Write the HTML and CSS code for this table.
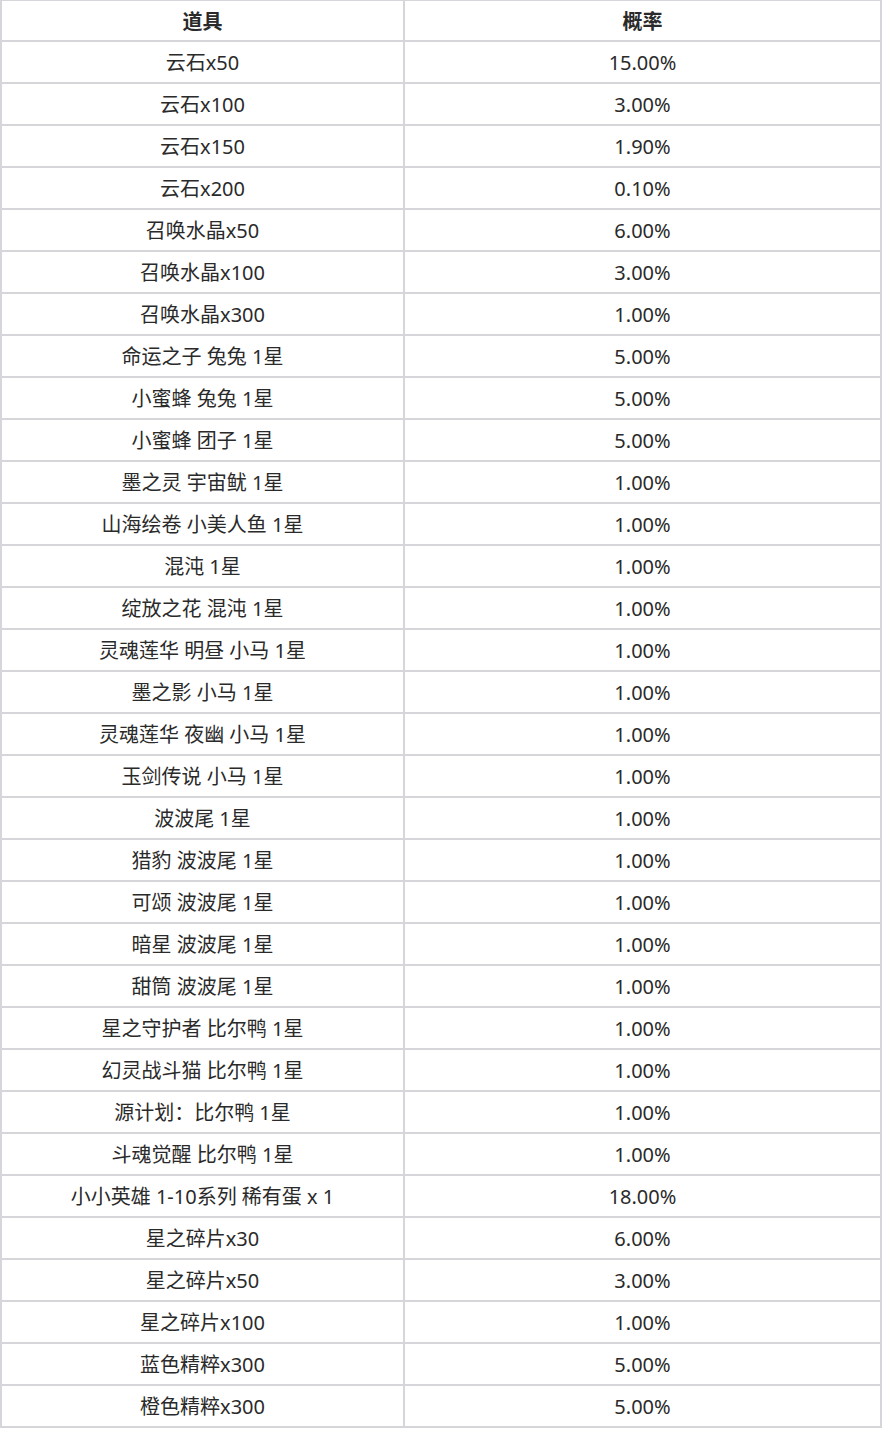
FILE: index.html
```html
<!DOCTYPE html>
<html lang="zh-CN">
<head>
<meta charset="utf-8">
<title>概率</title>
<link rel="stylesheet" href="styles.css">
</head>
<body>
<table class="rates">
<thead>
<tr><th class="c-item">道具</th><th class="c-rate">概率</th></tr>
</thead>
<tbody>
<tr><td class="c-item">云石x50</td><td class="c-rate">15.00%</td></tr>
<tr><td class="c-item">云石x100</td><td class="c-rate">3.00%</td></tr>
<tr><td class="c-item">云石x150</td><td class="c-rate">1.90%</td></tr>
<tr><td class="c-item">云石x200</td><td class="c-rate">0.10%</td></tr>
<tr><td class="c-item">召唤水晶x50</td><td class="c-rate">6.00%</td></tr>
<tr><td class="c-item">召唤水晶x100</td><td class="c-rate">3.00%</td></tr>
<tr><td class="c-item">召唤水晶x300</td><td class="c-rate">1.00%</td></tr>
<tr><td class="c-item">命运之子 兔兔 1星</td><td class="c-rate">5.00%</td></tr>
<tr><td class="c-item">小蜜蜂 兔兔 1星</td><td class="c-rate">5.00%</td></tr>
<tr><td class="c-item">小蜜蜂 团子 1星</td><td class="c-rate">5.00%</td></tr>
<tr><td class="c-item">墨之灵 宇宙鱿 1星</td><td class="c-rate">1.00%</td></tr>
<tr><td class="c-item">山海绘卷 小美人鱼 1星</td><td class="c-rate">1.00%</td></tr>
<tr><td class="c-item">混沌 1星</td><td class="c-rate">1.00%</td></tr>
<tr><td class="c-item">绽放之花 混沌 1星</td><td class="c-rate">1.00%</td></tr>
<tr><td class="c-item">灵魂莲华 明昼 小马 1星</td><td class="c-rate">1.00%</td></tr>
<tr><td class="c-item">墨之影 小马 1星</td><td class="c-rate">1.00%</td></tr>
<tr><td class="c-item">灵魂莲华 夜幽 小马 1星</td><td class="c-rate">1.00%</td></tr>
<tr><td class="c-item">玉剑传说 小马 1星</td><td class="c-rate">1.00%</td></tr>
<tr><td class="c-item">波波尾 1星</td><td class="c-rate">1.00%</td></tr>
<tr><td class="c-item">猎豹 波波尾 1星</td><td class="c-rate">1.00%</td></tr>
<tr><td class="c-item">可颂 波波尾 1星</td><td class="c-rate">1.00%</td></tr>
<tr><td class="c-item">暗星 波波尾 1星</td><td class="c-rate">1.00%</td></tr>
<tr><td class="c-item">甜筒 波波尾 1星</td><td class="c-rate">1.00%</td></tr>
<tr><td class="c-item">星之守护者 比尔鸭 1星</td><td class="c-rate">1.00%</td></tr>
<tr><td class="c-item">幻灵战斗猫 比尔鸭 1星</td><td class="c-rate">1.00%</td></tr>
<tr><td class="c-item">源计划：比尔鸭 1星</td><td class="c-rate">1.00%</td></tr>
<tr><td class="c-item">斗魂觉醒 比尔鸭 1星</td><td class="c-rate">1.00%</td></tr>
<tr><td class="c-item">小小英雄 1-10系列 稀有蛋 x 1</td><td class="c-rate">18.00%</td></tr>
<tr><td class="c-item">星之碎片x30</td><td class="c-rate">6.00%</td></tr>
<tr><td class="c-item">星之碎片x50</td><td class="c-rate">3.00%</td></tr>
<tr><td class="c-item">星之碎片x100</td><td class="c-rate">1.00%</td></tr>
<tr><td class="c-item">蓝色精粹x300</td><td class="c-rate">5.00%</td></tr>
<tr><td class="c-item">橙色精粹x300</td><td class="c-rate">5.00%</td></tr>
</tbody>
</table>
</body>
</html>
```

FILE: styles.css
```css
html, body {
  margin: 0;
  padding: 0;
  background: #ffffff;
}

body {
  font-family: "Noto Sans", "Noto Sans CJK SC", sans-serif;
  font-size: 20px;
  color: #2a2a2a;
}

.rates {
  border-collapse: separate;
  border-spacing: 0;
  width: 882px;
  table-layout: fixed;
  border-top: 1px solid #d5d5da;
  border-left: 2px solid #d5d5da;
}

.rates th,
.rates td {
  padding: 2px 0 0 0;
  text-align: center;
  vertical-align: middle;
  border-right: 2px solid #d5d5da;
  border-bottom: 2px solid #d5d5da;
  height: 38px;
  line-height: 1;
  white-space: nowrap;
}

.rates th {
  height: 37px;
  font-weight: bold;
}

.rates .c-item {
  width: 401px;
}
```
